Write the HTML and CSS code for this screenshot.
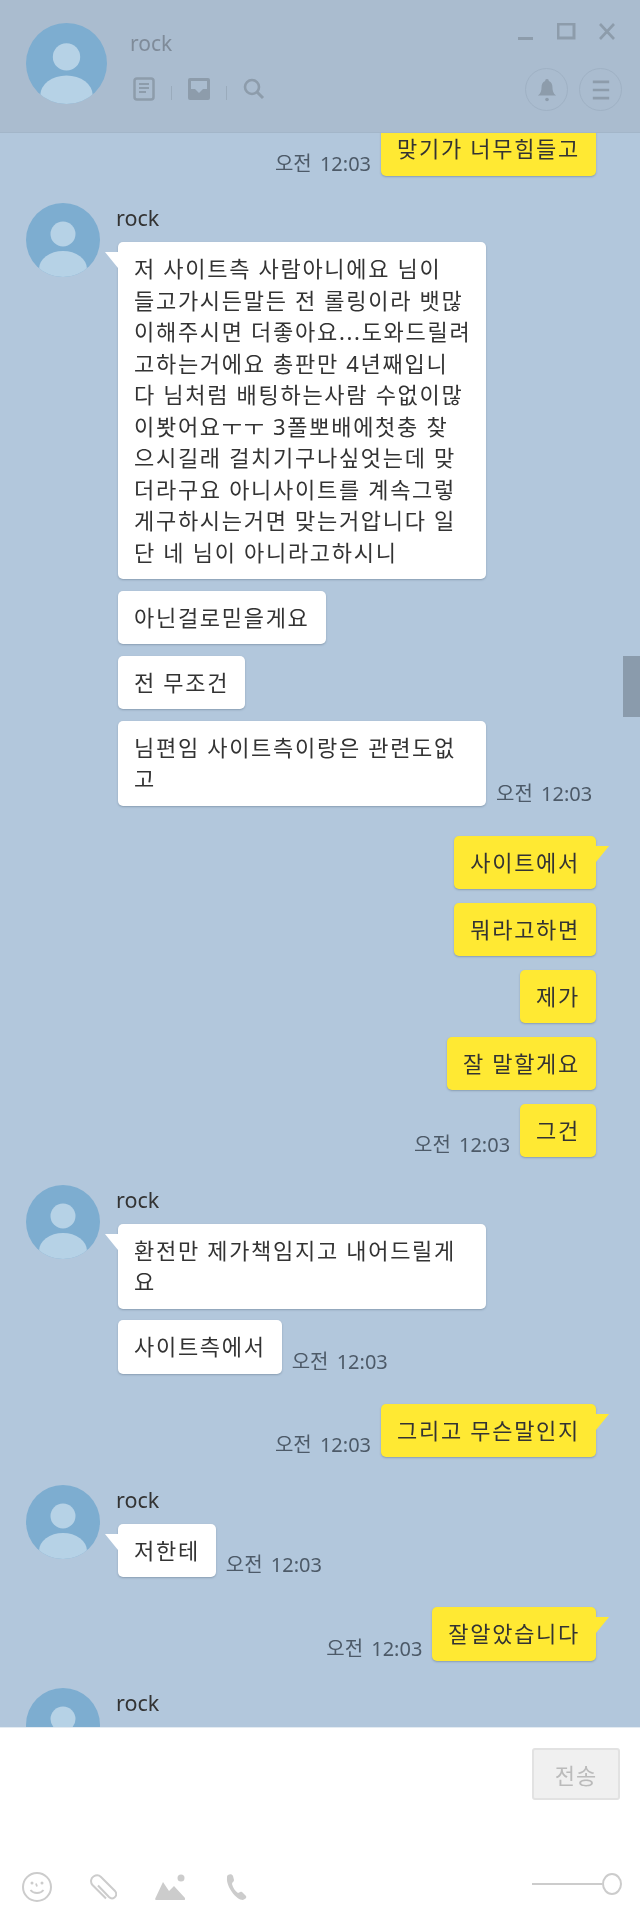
FILE: index.html
```html
<!DOCTYPE html>
<html lang="ko">

<head>
    <meta charset="UTF-8">
    <title>rock</title>
    <link rel="stylesheet" href="styles.css">
</head>

<body>
    <div id="window">
        <header id="top">
            <svg class="avatar avatar-top" viewBox="0 0 74 74"><use href="#person"></use></svg>
            <div class="top-info">
                <div class="top-name">rock</div>
                <div class="top-tools">
                    <svg class="tool tool-doc" viewBox="0 0 22 24">
                        <rect x="1.5" y="1.5" width="19" height="21" rx="2.500" fill="none" stroke="#8d9cab" stroke-width="2.500"></rect>
                        <path d="M6 7h10M6 11h10M6 15h7" stroke="#8d9cab" stroke-width="1.800"></path>
                    </svg>
                    <span class="tool-sep"></span>
                    <svg class="tool tool-doc" viewBox="0 0 22 24">
                        <rect x="0" y="1" width="22" height="22" rx="2" fill="#8d9cab"></rect>
                        <path d="M3 4h16v8h-4l-4 4-4-4H3z" fill="#aabccf"></path>
                    </svg>
                    <span class="tool-sep"></span>
                    <svg class="tool tool-search" viewBox="0 0 22 22">
                        <circle cx="9" cy="9" r="7" fill="none" stroke="#8d9cab" stroke-width="2.600"></circle>
                        <path d="M14 14l6 6" stroke="#8d9cab" stroke-width="3"></path>
                    </svg>
                </div>
            </div>
            <div class="top-right">
                <div class="win-btns">
                    <svg class="win-btn" viewBox="0 0 20 18"><path d="M1 15.500h15" stroke="#8d9cab" stroke-width="3"></path></svg>
                    <svg class="win-btn" viewBox="0 0 20 18"><rect x="1" y="1" width="16" height="14" fill="none" stroke="#8d9cab" stroke-width="3"></rect></svg>
                    <svg class="win-btn" viewBox="0 0 20 18"><path d="M3 1l14 15M17 1L3 16" stroke="#8d9cab" stroke-width="2.600"></path></svg>
                </div>
                <div class="round-btns">
                    <div class="round-btn">
                        <svg viewBox="0 0 22 26">
                            <path d="M11 1c1.500 0 2 1 2 2 3 1 4 4 4 7 0 4 1 7 4 9H1c3-2 4-5 4-9 0-3 1-6 4-7 0-1 .5-2 2-2z" fill="#8d9cab"></path>
                            <circle cx="11" cy="23.500" r="2" fill="#8d9cab"></circle>
                        </svg>
                    </div>
                    <div class="round-btn">
                        <svg viewBox="0 0 22 26"><path d="M2 4h18M2 13h18M2 22h18" stroke="#8d9cab" stroke-width="3"></path></svg>
                    </div>
                </div>
            </div>
        </header>

        <main id="chat">
            <div class="row-me first">
                <span class="time">오전 12:03</span>
                <div class="bubble yellow">맞기가 너무힘들고</div>
            </div>

            <div class="group-other">
                <svg class="avatar" viewBox="0 0 74 74"><use href="#person"></use></svg>
                <div class="other-col">
                    <div class="name">rock</div>
                    <div class="bubble white tail wide">저 사이트측 사람아니에요 님이<br>들고가시든말든 전 롤링이라 뱃많<br>이해주시면 더좋아요...도와드릴려<br>고하는거에요 총판만 4년째입니<br>다 님처럼 배팅하는사람 수없이많<br>이봣어요ㅜㅜ 3폴뽀배에첫충 찾<br>으시길래 걸치기구나싶엇는데 맞<br>더라구요 아니사이트를 계속그렇<br>게구하시는거면 맞는거압니다 일<br>단 네 님이 아니라고하시니</div>
                    <div class="bubble white">아닌걸로믿을게요</div>
                    <div class="bubble white">전 무조건</div>
                    <div class="row-other">
                        <div class="bubble white wide">님편임 사이트측이랑은 관련도없<br>고</div>
                        <span class="time">오전 12:03</span>
                    </div>
                </div>
            </div>

            <div class="group-me">
                <div class="row-me"><div class="bubble yellow tail">사이트에서</div></div>
                <div class="row-me"><div class="bubble yellow">뭐라고하면</div></div>
                <div class="row-me"><div class="bubble yellow">제가</div></div>
                <div class="row-me"><div class="bubble yellow">잘 말할게요</div></div>
                <div class="row-me">
                    <span class="time">오전 12:03</span>
                    <div class="bubble yellow">그건</div>
                </div>
            </div>

            <div class="group-other">
                <svg class="avatar" viewBox="0 0 74 74"><use href="#person"></use></svg>
                <div class="other-col">
                    <div class="name">rock</div>
                    <div class="bubble white tail wide">환전만 제가책임지고 내어드릴게<br>요</div>
                    <div class="row-other">
                        <div class="bubble white">사이트측에서</div>
                        <span class="time">오전 12:03</span>
                    </div>
                </div>
            </div>

            <div class="group-me">
                <div class="row-me">
                    <span class="time">오전 12:03</span>
                    <div class="bubble yellow tail">그리고 무슨말인지</div>
                </div>
            </div>

            <div class="group-other">
                <svg class="avatar" viewBox="0 0 74 74"><use href="#person"></use></svg>
                <div class="other-col">
                    <div class="name">rock</div>
                    <div class="row-other">
                        <div class="bubble white tail">저한테</div>
                        <span class="time">오전 12:03</span>
                    </div>
                </div>
            </div>

            <div class="group-me">
                <div class="row-me">
                    <span class="time">오전 12:03</span>
                    <div class="bubble yellow tail">잘알았습니다</div>
                </div>
            </div>

            <div class="group-other">
                <svg class="avatar" viewBox="0 0 74 74"><use href="#person"></use></svg>
                <div class="other-col">
                    <div class="name">rock</div>
                </div>
            </div>

            <div class="scroll-thumb"></div>
        </main>

        <footer id="input">
            <div class="input-top">
                <button class="send">전송</button>
            </div>
            <div class="input-bottom">
                <div class="input-icons">
                    <svg class="icon-face" viewBox="0 0 30 30">
                        <circle cx="15" cy="15" r="14" fill="none" stroke="#ccc" stroke-width="2"></circle>
                        <circle cx="10" cy="11" r="1.500" fill="#ccc"></circle>
                        <circle cx="20" cy="11" r="1.500" fill="#ccc"></circle>
                        <path d="M14 11.500l1 3M8.500 18c3 4 10 4 13 0" fill="none" stroke="#ccc" stroke-width="1.800"></path>
                    </svg>
                    <svg class="icon-clip" viewBox="0 0 27 26">
                        <path d="M16 24.500L2.500 11C0 8 1 4 3.500 2.500 6 1 9 1 11 3l14 14c2 2.500 1.500 5-.5 6.500s-4 1-5.500-.5L8 11.500" fill="none" stroke="#ccc" stroke-width="2"></path>
                    </svg>
                    <svg class="icon-pic" viewBox="0 0 30 26">
                        <circle cx="26" cy="4" r="3.500" fill="#ccc"></circle>
                        <path d="M1 26c-1 0-1-1-.5-2L8 8l6 9 5-5 11 12c.5 1 0 2-1 2z" fill="#ccc"></path>
                    </svg>
                    <svg class="icon-phone" viewBox="0 0 21 26">
                        <path d="M2 1c2-1 4-1 5 1l1 4c0 2-2 2-2 4 1 4 3 7 6 9 1 0 2-2 4-1l4 4c1 2-1 3-3 4C10 26 0 12 1 4c0-2 0-2 1-3z" fill="#ccc"></path>
                    </svg>
                </div>
                <div class="slider">
                    <span class="slider-line"></span>
                    <span class="slider-knob"></span>
                </div>
            </div>
        </footer>
    </div>

    <!-- 프로필 기본 이미지 -->
    <svg class="defs" width="0" height="0">
        <defs>
            <clipPath id="avatar-clip"><circle cx="37" cy="37" r="37"></circle></clipPath>
            <symbol id="person" viewBox="0 0 74 74">
                <circle cx="37" cy="37" r="37" fill="#7dadd0"></circle>
                <g clip-path="url(#avatar-clip)">
                    <circle cx="37" cy="31" r="12.500" fill="#b6d2e6"></circle>
                    <ellipse cx="37" cy="66" rx="24" ry="18" fill="#b6d2e6"></ellipse>
                </g>
            </symbol>
        </defs>
    </svg>
</body>

</html>
```

FILE: styles.css
```css
* {
    box-sizing: border-box;
}

body {
    margin: 0;
    font-family: "Noto Sans", "Noto Sans CJK KR", sans-serif;
    color: #333;
}

.defs {
    position: absolute;
}

#window {
    display: flex;
    flex-direction: column;
    height: 1922px;
    overflow: hidden;
    filter: blur(0.4px);
}

/* header */
#top {
    display: flex;
    flex: none;
    height: 133px;
    padding: 23px 18px 0 26px;
    background-color: #aabccf;
    border-bottom: 1px solid #a3b6c9;
}

.avatar {
    display: block;
    flex: none;
    width: 74px;
    height: 74px;
}

.avatar-top {
    width: 81px;
    height: 81px;
}

.top-info {
    flex: 1;
    margin-left: 23px;
}

.top-name {
    margin-top: 6px;
    font-size: 21px;
    line-height: 28px;
    color: #7f8b99;
}

.top-tools {
    display: flex;
    align-items: center;
    margin-top: 20px;
    margin-left: 3px;
}

.tool-doc {
    width: 22px;
    height: 24px;
}

.tool-search {
    width: 22px;
    height: 22px;
}

.tool-sep {
    width: 1px;
    height: 14px;
    margin: 8px 16px 0;
    background-color: #9aabbc;
}

.top-right {
    display: flex;
    flex-direction: column;
    align-items: flex-end;
}

.win-btns {
    display: flex;
    gap: 20px;
    margin-right: 5px;
}

.win-btn {
    width: 20px;
    height: 18px;
}

.round-btns {
    display: flex;
    gap: 11px;
    margin-top: 27px;
}

.round-btn {
    display: flex;
    align-items: center;
    justify-content: center;
    width: 43px;
    height: 43px;
    border: 1px solid #9fb1c4;
    border-radius: 50%;
}

.round-btn svg {
    width: 20px;
    height: 24px;
}

/* chat */
#chat {
    position: relative;
    flex: 1;
    padding: 0 44px 0 26px;
    overflow: hidden;
    background-color: #b2c7dc;
}

.row-me {
    display: flex;
    align-items: flex-end;
    justify-content: flex-end;
    gap: 10px;
}

.row-me.first {
    margin-top: -11px;
}

.row-other {
    display: flex;
    align-items: flex-end;
    gap: 10px;
}

.group-me {
    display: flex;
    flex-direction: column;
    gap: 13.5px;
    margin-top: 30px;
}

.group-other {
    display: flex;
    gap: 18px;
    margin-top: 27.5px;
}

.other-col {
    display: flex;
    flex-direction: column;
    align-items: flex-start;
    gap: 11.5px;
}

.name {
    height: 39px;
    margin-bottom: -11.5px;
    margin-left: -2px;
    padding-top: 1px;
    font-size: 21.5px;
    line-height: 28px;
    color: #333;
}

.bubble {
    position: relative;
    padding: 11px 16px;
    border-radius: 5px;
    font-size: 22px;
    letter-spacing: 1.7px;
    line-height: 31.5px;
    white-space: nowrap;
    box-shadow: 0 1px 2px rgba(60, 80, 100, 0.35);
}

.wide {
    width: 368px;
}

.white {
    background-color: #fff;
}

.yellow {
    background-color: #ffe933;
}

.tail::before {
    content: "";
    position: absolute;
    top: 10px;
    border-bottom: 16px solid transparent;
}

.white.tail::before {
    left: -13px;
    border-right: 13px solid #fff;
}

.yellow.tail::before {
    right: -13px;
    border-left: 13px solid #ffe933;
}

.time {
    flex: none;
    margin-bottom: -1px;
    font-size: 20px;
    word-spacing: 3px;
    line-height: 27px;
    color: #4d5a68;
}

.scroll-thumb {
    position: absolute;
    top: 523px;
    right: 0;
    width: 17px;
    height: 61px;
    background-color: #8a9bac;
}

/* input */
#input {
    flex: none;
    height: 195px;
    padding: 20px 20px 0 22px;
    background-color: #fff;
    border-top: 1px solid #e3ebf2;
}

.input-top {
    display: flex;
    justify-content: flex-end;
}

.send {
    width: 88px;
    height: 52px;
    padding: 0;
    background-color: #f0f0f0;
    border: 2px solid #e2e2e2;
    border-radius: 3px;
    font-family: inherit;
    font-size: 22px;
    letter-spacing: 1px;
    color: #bbb;
}

.input-bottom {
    display: flex;
    align-items: flex-start;
    justify-content: space-between;
    margin-top: 72px;
}

.input-icons {
    display: flex;
    align-items: center;
    gap: 38px;
}

.icon-face {
    width: 30px;
    height: 30px;
}

.icon-clip {
    width: 27px;
    height: 26px;
}

.icon-pic {
    width: 30px;
    height: 26px;
}

.icon-phone {
    width: 21px;
    height: 26px;
    margin-left: 3px;
}

.slider {
    display: flex;
    align-items: center;
    width: 90px;
    margin-top: 1px;
    margin-right: -2px;
}

.slider-line {
    flex: 1;
    height: 2px;
    background-color: #ccc;
}

.slider-knob {
    flex: none;
    width: 20px;
    height: 22px;
    background-color: #fff;
    border: 2px solid #ccc;
    border-radius: 50%;
}
```
